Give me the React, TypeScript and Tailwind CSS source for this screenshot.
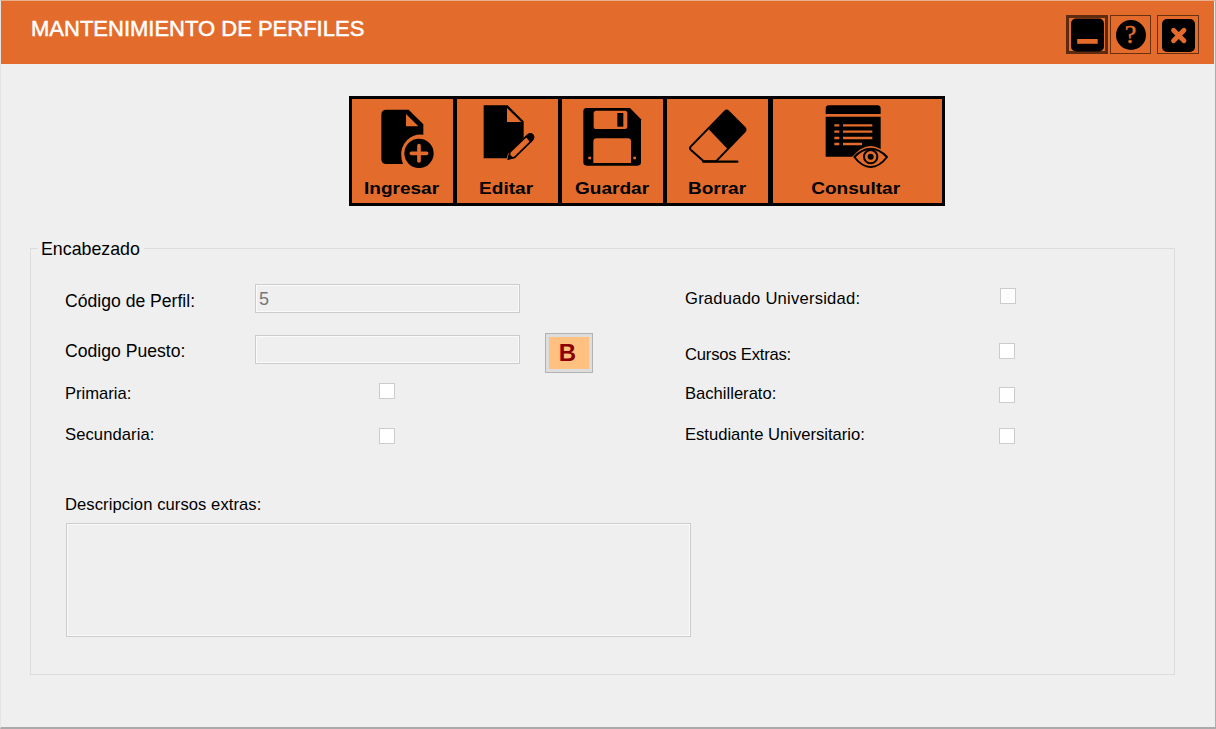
import type { ReactNode } from "react";

const ORANGE = "#e36c2c";

function Tool({ label, width, viewBox, children, shift = "" }: { label: string; width: string; viewBox: string; children: ReactNode; shift?: string }) {
  return (
    <button className={`${width} flex h-[104px] shrink-0 flex-col items-center bg-[#e36c2c]`}>
      <svg className="h-[79px] w-full shrink-0" viewBox={viewBox}>
        {children}
      </svg>
      <span className={`${shift} block scale-x-[1.12] text-[17px] leading-[22px] font-bold whitespace-nowrap text-black`}>{label}</span>
    </button>
  );
}

function Check({ className = "" }: { className?: string }) {
  return <span className={`${className} block size-4 shrink-0 border border-[#cccccc] bg-white`} role="checkbox" aria-checked={false} />;
}

function Field({ className = "", children }: { className?: string; children?: ReactNode }) {
  return (
    <div className={`${className} border border-[#cccccc] bg-[#efefef] shadow-[inset_0_0_0_1px_#fafafa]`}>{children}</div>
  );
}

export default function App() {
  return (
    <div className="flex h-[729px] w-[1216px] flex-col overflow-hidden border-t border-r border-b-2 border-l border-t-[#e9b090] border-r-[#adadad] border-b-[#aaaaaa] border-l-[#e4e4e4] bg-[#efefef] font-['Liberation_Sans',Arial,sans-serif] text-black">
      <header className="mr-px flex h-[63px] shrink-0 justify-between bg-[#e36c2c] pr-[15px] pl-[30px]">
        <h1 className="mt-[14px] text-[22px] leading-[27px] whitespace-nowrap text-white [-webkit-text-stroke:0.5px_white]">MANTENIMIENTO DE PERFILES</h1>
        <div className="flex pt-[14px]">
          <button className="mr-[2px] h-[39px] w-[42px] border-[3px] border-[#5e2b10]">
            <svg className="-mt-px block h-[35px] w-9" viewBox="0 0 36 35">
              <rect x="2" y="1.5" width="33" height="33" rx="5" />
              <rect x="8.2" y="22" width="20.5" height="4.8" fill={ORANGE} />
            </svg>
          </button>
          <button className="mr-[6px] flex h-[39px] w-[41px] items-center justify-center border border-[#6b3010]">
            <span className="flex size-[30px] items-center justify-center rounded-full bg-black font-['Liberation_Serif',serif] text-[26px] leading-[30px] text-[#e36c2c] [-webkit-text-stroke:0.5px_#e36c2c]">?</span>
          </button>
          <button className="h-[39px] w-[42px] border border-[#6b3010]">
            <svg className="block h-[37px] w-10" viewBox="0 0 40 37">
              <rect x="4" y="3" width="33" height="33" rx="5" />
              <path d="M15.5 14.3l10.5 10.5M26 14.3L15.5 24.8" stroke={ORANGE} strokeWidth="4.8" strokeLinecap="round" />
            </svg>
          </button>
        </div>
      </header>

      <nav className="mt-8 ml-[348px] flex h-[110px] w-[596px] shrink-0 gap-1 bg-black p-[3px]">
        <Tool label="Ingresar" width="w-[101px]" viewBox="37 33 303 237" shift="-ml-[2px]">
          <path d="M140 65H207L251 109V140Q221 137 202 157Q182 178 185 205Q185 217 190 228H140Q125 228 125 213V80Q125 65 140 65Z" />
          <path d="M199 78V115H236Z" fill={ORANGE} />
          <circle cx="238" cy="196" r="44" />
          <path d="M238 173V219M215 196H261" stroke={ORANGE} strokeWidth="11" strokeLinecap="round" />
        </Tool>
        <Tool label="Editar" width="w-[101px]" viewBox="352 33 303 237" shift="-ml-[2px]">
          <path d="M432 52H504L552 100V151L505 197L501 211H432Z" />
          <path d="M502 60V102H545Z" fill={ORANGE} />
          <path d="M506 213L511 192L563 142Q571 134 579 141Q585 149 577 157L525 208Z" fill={ORANGE} stroke="#000" strokeWidth="5" strokeLinejoin="round" />
          <path d="M558 146L566 138Q574 132 581 140Q587 148 579 156L571 162Z" />
          <path d="M503 216L509 198L522 210Z" />
        </Tool>
        <Tool label="Guardar" width="w-[101px]" viewBox="37 33 303 237">
          <path d="M111 60H241L274 94V223Q274 233 264 233H111Q101 233 101 223V70Q101 60 111 60Z" />
          <path d="M140 68H226Q233 68 233 76V116Q233 123 226 123H140Q132 123 132 116V76Q132 68 140 68Z" fill={ORANGE} />
          <rect x="203" y="75" width="18" height="41" />
          <path d="M131 225V161Q131 151 141 151H235Q244 151 244 161V225Z" fill={ORANGE} />
          <path d="M116 206h8v8h-8zM251 206h8v8h-8z" fill={ORANGE} />
        </Tool>
        <Tool label="Borrar" width="w-[101px]" viewBox="352 33 303 237" shift="-ml-[2px]">
          <path d="M423 176L525 71Q531 65 537 71L585 119Q590 125 585 131L499 220H462L423 185Q419 180 423 176Z" fill={ORANGE} stroke="#000" strokeWidth="6" strokeLinejoin="round" />
          <path d="M477 124L528 70Q532 66 537 71L586 120Q590 125 586 130L533 182Z" />
          <path d="M461 221H563" stroke="#000" strokeWidth="7" strokeLinecap="round" />
        </Tool>
        <Tool label="Consultar" width="ml-px w-[169px]" viewBox="71 33 507 237" shift="-ml-[3px]">
          <path d="M229 78V62Q229 52 239 52H384Q394 52 394 62V78ZM229 86H394V206H229Z" />
          <path d="M255 112H270M255 131H270M255 150H270M255 168H270M281 112H369M281 131H369M281 150H369M281 168H338" stroke={ORANGE} strokeWidth="7" />
          <path d="M308 207Q336 174 364 174T420 207Q392 244 364 244T308 207Z" fill={ORANGE} />
          <path d="M315 207Q338 182 364 182T413 207Q390 237 364 237T315 207Z" fill={ORANGE} stroke="#000" strokeWidth="6" strokeLinejoin="round" />
          <circle cx="364" cy="206" r="20" fill="none" stroke="#000" strokeWidth="6" />
          <circle cx="364" cy="206" r="9" />
        </Tool>
      </nav>

      <fieldset className="mt-8 ml-[29px] h-[437px] w-[1145px] shrink-0 border border-[#dcdcdc]">
        <legend className="ml-[7px] h-5 pr-1 pl-[3px] text-[17.8px] leading-[23px]">Encabezado</legend>
        <div className="flex pl-[34px] text-[16.6px] leading-[22px] whitespace-nowrap">
          <div className="w-[620px] shrink-0 pt-[26px]">
            <div className="flex h-[29px]">
              <label className="mt-[7px] w-[190px] text-[17.6px] leading-5">Código de Perfil:</label>
              <Field className="h-[29px] w-[265px] pt-[3px] pl-[3px] text-[18px] text-[#777777]">5</Field>
            </div>
            <div className="mt-5 flex h-10">
              <label className="mt-2 w-[190px] text-[17.6px] leading-5">Codigo Puesto:</label>
              <Field className="mt-[2px] h-[29px] w-[265px]" />
              <button className="ml-[25px] h-10 w-12 border border-[#b2b2b2] bg-[#dddddd] p-[3px]">
                <span className="flex h-full items-center justify-center bg-[#ffc080] pr-[3px] text-[24px] leading-8 font-bold text-[#8b0000]">B</span>
              </button>
            </div>
            <div className="mt-[10px] flex h-5">
              <label className="w-[314px]">Primaria:</label>
              <Check />
            </div>
            <div className="mt-[22px] flex h-5">
              <label className="w-[314px] leading-5 tracking-[0.08px]">Secundaria:</label>
              <Check className="mt-[3px]" />
            </div>
            <label className="mt-[50px] block h-5 leading-5 tracking-[0.07px]">Descripcion cursos extras:</label>
            <Field className="mt-2 ml-px h-[114px] w-[625px]" />
          </div>
          <div className="w-[335px] shrink-0 pt-[30px]">
            <div className="flex h-5">
              <label className="w-[315px] tracking-[0.22px]">Graduado Universidad:</label>
              <Check />
            </div>
            <div className="mt-[35px] flex h-5">
              <label className="mt-px w-[314px] tracking-[-0.2px]">Cursos Extras:</label>
              <Check />
            </div>
            <div className="mt-5 flex h-5">
              <label className="w-[314px]">Bachillerato:</label>
              <Check className="mt-1" />
            </div>
            <div className="mt-[22px] flex h-5">
              <label className="w-[314px] leading-5">Estudiante Universitario:</label>
              <Check className="mt-[3px]" />
            </div>
          </div>
        </div>
      </fieldset>
    </div>
  );
}
